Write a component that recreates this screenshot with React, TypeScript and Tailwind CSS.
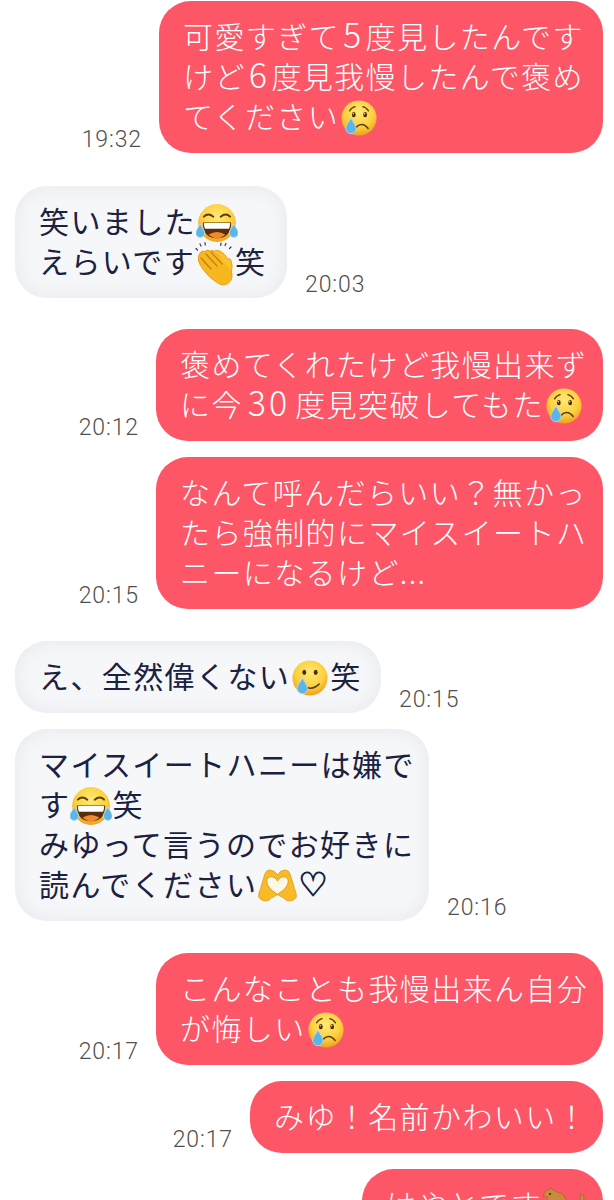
import type { ReactNode } from "react";

const jp = "font-['Noto_Sans_CJK_JP','Noto_Sans',sans-serif]";

function FaceDefs({ id }: { id: string }) {
  return (
    <defs>
      <radialGradient id={id} cx="50%" cy="35%" r="68%">
        <stop offset="0%" stopColor="#ffe974" />
        <stop offset="60%" stopColor="#fcd03f" />
        <stop offset="100%" stopColor="#ee9a1c" />
      </radialGradient>
    </defs>
  );
}

function Tear({ x, y, s = 1 }: { x: number; y: number; s?: number }) {
  return (
    <path
      d={`M${x} ${y}c${2 * s} ${4 * s} ${5 * s} ${7 * s} ${5 * s} ${10 * s}a${5 * s} ${5 * s} 0 0 1 ${-10 * s} 0c0 ${-3 * s} ${3 * s} ${-6 * s} ${5 * s} ${-10 * s}z`}
      fill="#5fb4e6"
      stroke="#b5e2f7"
      strokeWidth="0.8"
    />
  );
}

function CryFace() {
  return (
    <svg viewBox="0 0 40 40" className="-my-4 mx-px inline-block h-[38px] w-[38px] align-[7px]">
      <FaceDefs id="cry" />
      <circle cx="20" cy="20" r="18.5" fill="url(#cry)" />
      <path d="M10 12.500q2.500-4 6-4.500M24 8q3.500.5 6 4.500" fill="none" stroke="#5b3a10" strokeWidth="1.300" strokeLinecap="round" />
      <ellipse cx="14.500" cy="16.500" rx="2" ry="2.700" fill="#4a2a0c" />
      <ellipse cx="26.500" cy="16.500" rx="2" ry="2.700" fill="#4a2a0c" />
      <circle cx="14" cy="15.500" r="0.700" fill="#fff" />
      <circle cx="26" cy="15.500" r="0.700" fill="#fff" />
      <path d="M17 29.500q5-4.500 9.500-1.500q2 1.300 3 3" fill="none" stroke="#5b3a10" strokeWidth="1.700" strokeLinecap="round" />
      <Tear x={11.500} y={20} s={1.100} />
    </svg>
  );
}

function LaughFace() {
  return (
    <svg viewBox="0 0 40 40" className="-my-4 inline-block h-[42px] w-[42px] align-[5px]">
      <FaceDefs id="laugh" />
      <circle cx="20" cy="20" r="18" fill="url(#laugh)" />
      <path d="M7.500 14q4-4 9 0M23.500 14q5-4 9 0" fill="none" stroke="#5b3a10" strokeWidth="1.800" strokeLinecap="round" />
      <path d="M6.500 19.500h27q0 15-13.500 15t-13.500-15z" fill="#5a2d0c" />
      <path d="M7.500 20h25q0 3.500-1 5.500h-23q-1-2-1-5.500z" fill="#fff" />
      <path d="M12 31q8-5 16 0q-3.500 3.500-8 3.500t-8-3.500z" fill="#f08a2c" />
      <Tear x={4} y={21} s={0.85} />
      <Tear x={36} y={21} s={0.85} />
    </svg>
  );
}

function SmileTearFace() {
  return (
    <svg viewBox="0 0 40 40" className="-my-4 mx-px inline-block h-[38px] w-[38px] align-[7px]">
      <FaceDefs id="smile" />
      <circle cx="20" cy="20" r="18.500" fill="url(#smile)" />
      <ellipse cx="14" cy="14" rx="2" ry="2.800" fill="#4a2a0c" />
      <ellipse cx="26" cy="14" rx="2" ry="2.800" fill="#4a2a0c" />
      <path d="M16.500 30q7 2.500 13-3.500" fill="none" stroke="#5b3a10" strokeWidth="1.700" strokeLinecap="round" />
      <Tear x={12} y={20} s={1.100} />
    </svg>
  );
}

function ClapHands() {
  return (
    <svg viewBox="0 0 40 46" className="-my-4 inline-block h-[46px] w-[40px] align-[3px]">
      <g stroke="#3b3a3a" strokeWidth="1.200" strokeLinecap="round">
        <path d="M1 8.500l1.500 1.500M5 4l1 2M10 2.500l.3 2.500M26 3l-.3 2.500M31 3.500l-1 2M36 7l-1.500 1.500" />
      </g>
      <path
        d="M5 13q2-3 5-1.500q2-2.500 5-.5q3-1.500 5 .5l10 9.500q6 6 7 13q.5 6-3.500 9q-5 3.500-10 .5q-9-5-15-13.500q-4-5-5-9q-1-5 1.500-8z"
        fill="#f7b71f"
        stroke="#e89412"
        strokeWidth="0.800"
      />
      <path d="M6 18l10 11M11 14l11 12M16 12l11 12" fill="none" stroke="#c67c10" strokeWidth="1.200" strokeLinecap="round" />
      <path d="M20 10q6 0 10 5l3 4q2-1 3 1q2 6 .5 12" fill="#f9c22f" stroke="#e89412" strokeWidth="0.800" />
    </svg>
  );
}

function HeartHands() {
  return (
    <svg viewBox="0 0 40 34" className="-my-4 mx-px inline-block h-[33px] w-[39px] align-[10px]">
      <path
        d="M20 6q-3-5-8-5q-3.500 0-5 4l-4.500 15q-2 4-2 9q3 4 8 4q3-.5 5-3l6.500-3.500l6.500 3.500q2 2.500 5 3q5 0 8-4q0-5-2-9l-4.500-15q-1.500-4-5-4q-5 0-8 5z"
        fill="#f8ba27"
        stroke="#e39a1a"
        strokeWidth="0.800"
      />
      <path d="M20 26q-11-6.500-11-13q0-5 5-5q4 0 6 4.500q2-4.500 6-4.500q5 0 5 5q0 6.500-11 13z" fill="#fdf8e6" stroke="#d98c16" strokeWidth="0.800" />
    </svg>
  );
}

function Dog() {
  return (
    <svg viewBox="0 0 44 40" className="-my-4 inline-block h-[40px] w-[44px] align-[7px]">
      <path d="M10 4l5 3 6 2 6 12 10-2 2-10q3 0 3 4 0 6-3 10v16H6V20l-1-8-4-1q2-6 9-8z" fill="#c98a3f" stroke="#a66a28" strokeWidth="0.800" />
      <circle cx="8" cy="9" r="1" fill="#33200f" />
    </svg>
  );
}

function Num({ children }: { children: ReactNode }) {
  return <span className="mx-[3px] text-[34px] leading-none">{children}</span>;
}

function Time({ children }: { children: ReactNode }) {
  return (
    <span className="mb-[1px] whitespace-nowrap font-['Roboto',sans-serif] text-[23px] leading-[24px] font-light tracking-[0.9px] text-[#4f4f4f]">
      {children}
    </span>
  );
}

function Sent({ time, children, width }: { time: string; children: ReactNode; width: string }) {
  return (
    <div className="flex items-end justify-end gap-[17px] pr-[11px]">
      <Time>{time}</Time>
      <div className={`${width} rounded-[32px] bg-[#fd5667] px-6 pt-[14px] pb-[18px] font-light text-white`}>{children}</div>
    </div>
  );
}

function Received({ time, children, width }: { time: string; children: ReactNode; width: string }) {
  return (
    <div className="flex items-end gap-[18px] pl-[15px]">
      <div className={`${width} rounded-[32px] bg-[#f6f7f9] px-6 pt-[14px] pb-[18px] text-[#1b2140] shadow-[inset_0_0_18px_rgba(215,218,224,0.5)]`}>{children}</div>
      <Time>{time}</Time>
    </div>
  );
}

export default function App() {
  return (
    <div className={`${jp} h-[1200px] w-[614px] overflow-hidden bg-white pt-[1px] text-[30px] leading-[40px] tracking-[1.4px] whitespace-nowrap`}>
      <Sent time="19:32" width="w-[444px]">
        <div>可愛すぎて<Num>5</Num>度見したんです</div>
        <div>けど<Num>6</Num>度見我慢したんで褒め</div>
        <div>てください<CryFace /></div>
      </Sent>
      <div className="mt-[33px]">
        <Received time="20:03" width="w-[272px]">
          <div>笑いました<LaughFace /></div>
          <div>えらいです<ClapHands />笑</div>
        </Received>
      </div>
      <div className="mt-[31px]">
        <Sent time="20:12" width="w-[447px]">
          <div>褒めてくれたけど我慢出来ず</div>
          <div>に今<span className="mx-[5px] text-[34px] leading-none tracking-[3px]">30</span>度見突破してもた<CryFace /></div>
        </Sent>
      </div>
      <div className="mt-4">
        <Sent time="20:15" width="w-[447px]">
          <div>なんて呼んだらいい？無かっ</div>
          <div>たら強制的にマイスイートハ</div>
          <div>ニーになるけど...</div>
        </Sent>
      </div>
      <div className="mt-[32px]">
        <Received time="20:15" width="w-[366px]">
          <div>え、全然偉くない<SmileTearFace />笑</div>
        </Received>
      </div>
      <div className="mt-4">
        <Received time="20:16" width="w-[414px]">
          <div>マイスイートハニーは嫌で</div>
          <div>す<LaughFace />笑</div>
          <div>みゆって言うのでお好きに</div>
          <div>読んでください<HeartHands /><span className="font-['DejaVu_Sans',sans-serif] text-[33px] leading-none [-webkit-text-stroke:1px_#1b2140]">♡</span></div>
        </Received>
      </div>
      <div className="mt-[32px]">
        <Sent time="20:17" width="w-[447px]">
          <div>こんなことも我慢出来ん自分</div>
          <div>が悔しい<CryFace /></div>
        </Sent>
      </div>
      <div className="mt-4">
        <Sent time="20:17" width="w-[353px]">
          <div>みゆ！名前かわいい！</div>
        </Sent>
      </div>
      <div className="mt-4">
        <Sent time="" width="w-[241px]">
          <div>はやとです<Dog /></div>
        </Sent>
      </div>
    </div>
  );
}
